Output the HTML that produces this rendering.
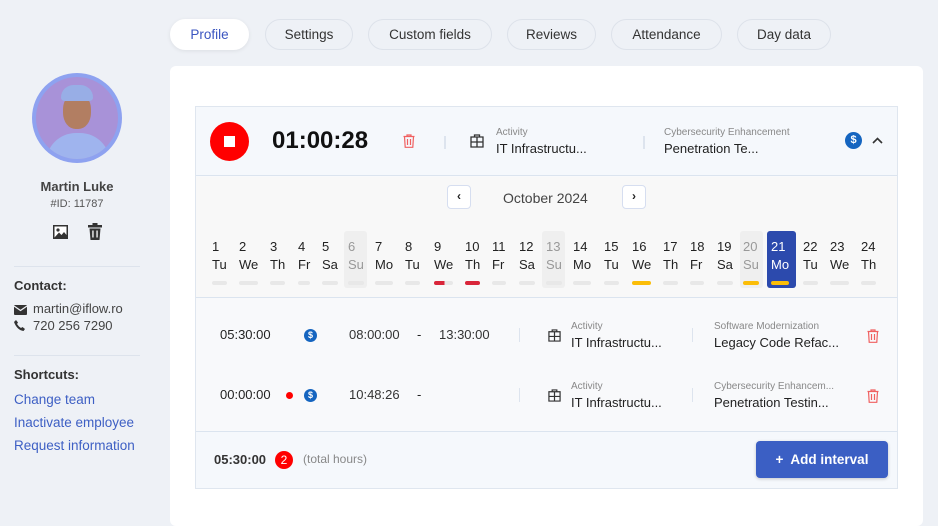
<!DOCTYPE html>
<html><head><meta charset="utf-8"><style>
*{box-sizing:border-box;margin:0;padding:0}
body{width:938px;height:507px;overflow:hidden;background:#eef1f6;font-family:"Liberation Sans",sans-serif;color:#222;position:relative}
.a{position:absolute}
.tab{position:absolute;top:19px;height:31px;border:1px solid #dde2ea;border-radius:16px;font-size:13.5px;color:#333;display:flex;align-items:center;justify-content:center}
.card{position:absolute;left:170px;top:66px;width:753px;height:460px;background:#fff;border-radius:6px}
.panel{position:absolute;left:195px;top:106px;width:703px;height:383px;border:1px solid #dfe6ef;background:#f8f9fb}
.day{position:absolute;top:238px;font-size:13px;line-height:18px;display:inline-block}
.day .b{height:4px;border-radius:2px;background:#e8e8e8;margin-top:7px}
.sun{color:#999}
.small{font-size:10px;color:#888}
.link{position:absolute;left:14px;font-size:13.5px;color:#3d5fc4}
</style></head><body>
<!-- tabs -->
<div class="tab" style="left:170px;width:79px;background:#fff;border-color:#fff;color:#3b55c0;box-shadow:0 1px 4px rgba(0,0,0,.08)">Profile</div>
<div class="tab" style="left:265px;width:88px">Settings</div>
<div class="tab" style="left:368px;width:124px">Custom fields</div>
<div class="tab" style="left:507px;width:89px">Reviews</div>
<div class="tab" style="left:611px;width:111px">Attendance</div>
<div class="tab" style="left:737px;width:94px">Day data</div>

<!-- sidebar -->
<div class="a" style="left:32px;top:73px;width:90px;height:90px;border-radius:50%;background:#8ea2f0;padding:4px">
 <div style="width:82px;height:82px;border-radius:50%;background:#a892d8;position:relative;overflow:hidden">
  <div class="a" style="left:10px;top:56px;width:64px;height:40px;border-radius:30px 30px 0 0;background:#9fb4ee"></div>
  <div class="a" style="left:27px;top:16px;width:28px;height:36px;border-radius:45%;background:#b27e62"></div>
  <div class="a" style="left:25px;top:8px;width:32px;height:16px;border-radius:14px 14px 4px 4px;background:#98aee6"></div>
 </div></div>
<div class="a" style="left:0;width:154px;top:179px;text-align:center;font-weight:bold;font-size:13px;color:#444">Martin Luke</div>
<div class="a" style="left:0;width:154px;top:198px;text-align:center;font-size:11px;color:#555">#ID: 11787</div>
<svg class="a" style="left:52px;top:224px" width="17" height="16" viewBox="0 0 17 16"><rect x="1" y="1" width="15" height="14" fill="#333"/><rect x="2.5" y="2.5" width="12" height="11" fill="#fff"/><circle cx="6" cy="6" r="1.6" fill="#333"/><path d="M2.5 13.5 L7 8.5 L9.5 11 L12 8 L14.5 11 V13.5Z" fill="#333"/></svg>
<svg class="a" style="left:88px;top:223px" width="14" height="18" viewBox="0 0 14 18"><rect x="0" y="2" width="14" height="2.5" fill="#333"/><rect x="4.5" y="0" width="5" height="2.5" fill="#333"/><path d="M1.5 5.5 H12.5 L11.5 17 H2.5Z" fill="#333"/><rect x="4.3" y="7.5" width="1.3" height="7" fill="#fff"/><rect x="8.4" y="7.5" width="1.3" height="7" fill="#fff"/></svg>
<div class="a" style="left:14px;top:266px;width:126px;height:1px;background:#dde3ec"></div>
<div class="a" style="left:14px;top:278px;font-weight:bold;font-size:13px;color:#333">Contact:</div>
<svg class="a" style="left:14px;top:305px" width="13" height="10" viewBox="0 0 13 10"><rect width="13" height="10" rx="1" fill="#333"/><path d="M0 1 L6.5 5.5 L13 1" stroke="#eef1f6" stroke-width="1.3" fill="none"/></svg>
<div class="a" style="left:33px;top:301px;font-size:13px;color:#444">martin@iflow.ro</div>
<svg class="a" style="left:14px;top:320px" width="11" height="11" viewBox="0 0 11 11"><path d="M2 0 L4 2.5 L3 4 Q4.5 6.5 7 8 L8.5 7 L11 9 L9.5 11 Q3 10 0 2Z" fill="#333"/></svg>
<div class="a" style="left:33px;top:318px;font-size:13px;color:#444">720 256 7290</div>
<div class="a" style="left:14px;top:355px;width:126px;height:1px;background:#dde3ec"></div>
<div class="a" style="left:14px;top:367px;font-weight:bold;font-size:13px;color:#333">Shortcuts:</div>
<div class="link" style="top:392px">Change team</div>
<div class="link" style="top:415px">Inactivate employee</div>
<div class="link" style="top:438px">Request information</div>

<div class="card"></div>
<div class="panel"></div>
<!-- header -->
<div class="a" style="left:196px;top:107px;width:701px;height:69px;background:#f5f8fc;border-bottom:1px solid #dbe4ef"></div>
<div class="a" style="left:210px;top:122px;width:39px;height:39px;border-radius:50%;background:#ff0000"><div class="a" style="left:14px;top:14px;width:11px;height:11px;background:#fff"></div></div>
<div class="a" style="left:272px;top:127px;font-size:24px;font-weight:bold;color:#111">01:00:28</div>
<svg class="a" style="left:403px;top:134px" width="12" height="14" viewBox="0 0 12 14"><path d="M0.5 2.5H11.5M4 2.5V1H8V2.5M1.5 2.5L2.2 13.3H9.8L10.5 2.5M4.5 5V11M7.5 5V11" stroke="#f06060" stroke-width="1.2" fill="none"/></svg>
<div class="a" style="left:444px;top:136px;width:2px;height:13px;background:#dde4ee"></div>
<svg class="a" style="left:470px;top:134px" width="14" height="14" viewBox="0 0 14 14"><path d="M4.5 3V1H9.5V3M1 3H13V13H1ZM1 8H13M7 3V13" stroke="#333" stroke-width="1.3" fill="none"/></svg>
<div class="a small" style="left:496px;top:127px">Activity</div>
<div class="a" style="left:496px;top:141px;font-size:13px;color:#222">IT Infrastructu...</div>
<div class="a" style="left:643px;top:136px;width:2px;height:13px;background:#dde4ee"></div>
<div class="a small" style="left:664px;top:127px">Cybersecurity Enhancement</div>
<div class="a" style="left:664px;top:141px;font-size:13px;color:#222">Penetration Te...</div>
<div class="a" style="left:845px;top:132px;width:17px;height:17px;border-radius:50%;background:#1565c0;color:#fff;font-size:11px;font-weight:bold;text-align:center;line-height:17px">$</div>
<svg class="a" style="left:872px;top:137px" width="11" height="7" viewBox="0 0 11 7"><path d="M1 6L5.5 1.5L10 6" stroke="#333" stroke-width="1.6" fill="none"/></svg>
<!-- calendar -->
<div class="a" style="left:196px;top:177px;width:701px;height:121px;background:#f8f8f8;border-bottom:1px solid #dbe4ef"></div>
<div class="a" style="left:447px;top:185px;width:24px;height:24px;border:1px solid #d6def0;border-radius:4px;background:#fff;font-size:12px;font-weight:bold;text-align:center;line-height:21px">‹</div>
<div class="a" style="left:503px;top:190px;font-size:14px;color:#444">October 2024</div>
<div class="a" style="left:622px;top:185px;width:24px;height:24px;border:1px solid #d6def0;border-radius:4px;background:#fff;font-size:12px;font-weight:bold;text-align:center;line-height:21px">›</div>
<div class="a" style="left:344px;top:231px;width:23px;height:57px;background:#efefef;border-radius:3px"></div>
<div class="a" style="left:542px;top:231px;width:23px;height:57px;background:#efefef;border-radius:3px"></div>
<div class="a" style="left:740px;top:231px;width:23px;height:57px;background:#efefef;border-radius:3px"></div>
<div class="a" style="left:767px;top:231px;width:29px;height:57px;background:#2c4aad;border-radius:3px"></div>
<div class="day" style="left:212px">1<br>Tu<div class="b"></div></div>
<div class="day" style="left:239px">2<br>We<div class="b"></div></div>
<div class="day" style="left:270px">3<br>Th<div class="b"></div></div>
<div class="day" style="left:298px">4<br>Fr<div class="b"></div></div>
<div class="day" style="left:322px">5<br>Sa<div class="b"></div></div>
<div class="day sun" style="left:348px">6<br>Su<div class="b"></div></div>
<div class="day" style="left:375px">7<br>Mo<div class="b"></div></div>
<div class="day" style="left:405px">8<br>Tu<div class="b"></div></div>
<div class="day" style="left:434px">9<br>We<div class="b" style="background:linear-gradient(90deg,#d9263a 55%,#e8e8e8 55%)"></div></div>
<div class="day" style="left:465px">10<br>Th<div class="b" style="background:#d9263a"></div></div>
<div class="day" style="left:492px">11<br>Fr<div class="b"></div></div>
<div class="day" style="left:519px">12<br>Sa<div class="b"></div></div>
<div class="day sun" style="left:546px">13<br>Su<div class="b"></div></div>
<div class="day" style="left:573px">14<br>Mo<div class="b"></div></div>
<div class="day" style="left:604px">15<br>Tu<div class="b"></div></div>
<div class="day" style="left:632px">16<br>We<div class="b" style="background:#fbbd08"></div></div>
<div class="day" style="left:663px">17<br>Th<div class="b"></div></div>
<div class="day" style="left:690px">18<br>Fr<div class="b"></div></div>
<div class="day" style="left:717px">19<br>Sa<div class="b"></div></div>
<div class="day sun" style="left:743px">20<br>Su<div class="b" style="background:#fbbd08"></div></div>
<div class="day" style="left:771px;color:#fff">21<br>Mo<div class="b" style="background:#fbbd08"></div></div>
<div class="day" style="left:803px">22<br>Tu<div class="b"></div></div>
<div class="day" style="left:830px">23<br>We<div class="b"></div></div>
<div class="day" style="left:861px">24<br>Th<div class="b"></div></div>
<!-- rows -->
<div class="a" style="left:220px;top:327px;font-size:13px">05:30:00</div>
<div class="a" style="left:304px;top:329px;width:13px;height:13px;border-radius:50%;background:#1565c0;color:#fff;font-size:9px;font-weight:bold;text-align:center;line-height:13px">$</div>
<div class="a" style="left:349px;top:327px;font-size:13px;color:#333">08:00:00</div>
<div class="a" style="left:417px;top:327px;font-size:13px">-</div>
<div class="a" style="left:439px;top:327px;font-size:13px;color:#333">13:30:00</div>
<div class="a" style="left:519px;top:328px;width:1px;height:14px;background:#dde4ee"></div>
<svg class="a" style="left:548px;top:329px" width="13" height="13" viewBox="0 0 14 14"><path d="M4.5 3V1H9.5V3M1 3H13V13H1ZM1 8H13M7 3V13" stroke="#333" stroke-width="1.3" fill="none"/></svg>
<div class="a small" style="left:571px;top:321px">Activity</div>
<div class="a" style="left:571px;top:335px;font-size:13px">IT Infrastructu...</div>
<div class="a" style="left:692px;top:328px;width:1px;height:14px;background:#dde4ee"></div>
<div class="a small" style="left:714px;top:321px">Software Modernization</div>
<div class="a" style="left:714px;top:335px;font-size:13px">Legacy Code Refac...</div>
<svg class="a" style="left:867px;top:329px" width="12" height="14" viewBox="0 0 12 14"><path d="M0.5 2.5H11.5M4 2.5V1H8V2.5M1.5 2.5L2.2 13.3H9.8L10.5 2.5M4.5 5V11M7.5 5V11" stroke="#f06060" stroke-width="1.2" fill="none"/></svg>

<div class="a" style="left:220px;top:387px;font-size:13px">00:00:00</div>
<div class="a" style="left:286px;top:392px;width:7px;height:7px;border-radius:50%;background:#f00"></div>
<div class="a" style="left:304px;top:389px;width:13px;height:13px;border-radius:50%;background:#1565c0;color:#fff;font-size:9px;font-weight:bold;text-align:center;line-height:13px">$</div>
<div class="a" style="left:349px;top:387px;font-size:13px;color:#333">10:48:26</div>
<div class="a" style="left:417px;top:387px;font-size:13px">-</div>
<div class="a" style="left:519px;top:388px;width:1px;height:14px;background:#dde4ee"></div>
<svg class="a" style="left:548px;top:389px" width="13" height="13" viewBox="0 0 14 14"><path d="M4.5 3V1H9.5V3M1 3H13V13H1ZM1 8H13M7 3V13" stroke="#333" stroke-width="1.3" fill="none"/></svg>
<div class="a small" style="left:571px;top:381px">Activity</div>
<div class="a" style="left:571px;top:395px;font-size:13px">IT Infrastructu...</div>
<div class="a" style="left:692px;top:388px;width:1px;height:14px;background:#dde4ee"></div>
<div class="a small" style="left:714px;top:381px">Cybersecurity Enhancem...</div>
<div class="a" style="left:714px;top:395px;font-size:13px">Penetration Testin...</div>
<svg class="a" style="left:867px;top:389px" width="12" height="14" viewBox="0 0 12 14"><path d="M0.5 2.5H11.5M4 2.5V1H8V2.5M1.5 2.5L2.2 13.3H9.8L10.5 2.5M4.5 5V11M7.5 5V11" stroke="#f06060" stroke-width="1.2" fill="none"/></svg>
<!-- footer -->
<div class="a" style="left:196px;top:431px;width:701px;height:57px;background:#f5f8fc;border-top:1px solid #dbe4ef"></div>
<div class="a" style="left:214px;top:452px;font-size:13px;font-weight:bold;color:#333">05:30:00</div>
<div class="a" style="left:275px;top:451px;width:18px;height:18px;border-radius:50%;background:#f00;color:#fff;font-size:12px;text-align:center;line-height:18px">2</div>
<div class="a" style="left:303px;top:452px;font-size:12px;color:#888">(total hours)</div>
<div class="a" style="left:756px;top:441px;width:132px;height:37px;background:#3b5fc4;border-radius:4px;color:#fff;font-size:13.5px;font-weight:bold;text-align:center;line-height:37px;box-shadow:0 1px 3px rgba(0,0,0,.2)">+&nbsp; Add interval</div>
</body></html>
